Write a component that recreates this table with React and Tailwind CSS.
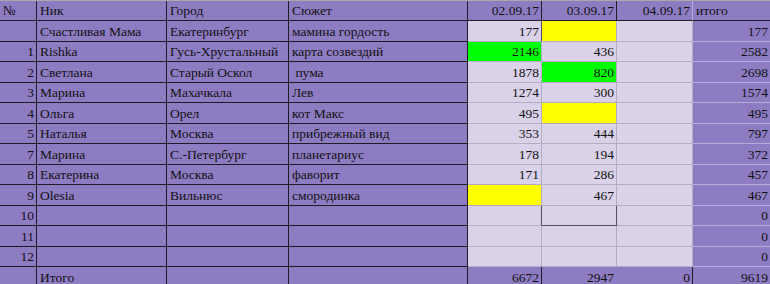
import React from "react";

const COLS = ["w-[37px]", "w-[130px]", "w-[122px]", "w-[179px]", "w-[74px]", "w-[75px]", "w-[76px]", "w-[77px]"];

// fill: l = lavender, g = green, y = yellow, b = lavender with dark frame
const ROWS = [
    { h: "h-[21px]", cells: ["", "Счастливая Мама", "Екатеринбург", "мамина гордость", "177", "", "", "177"], fill: ["d", "y", "l"] },
    { h: "h-[20px]", cells: ["1", "Rishka", "Гусь-Хрустальный", "карта созвездий", "2146", "436", "", "2582"], fill: ["g", "l", "l"] },
    { h: "h-[21px]", cells: ["2", "Светлана", "Старый Оскол", "\u00a0пума", "1878", "820", "", "2698"], fill: ["l", "g", "l"] },
    { h: "h-[20px]", cells: ["3", "Марина", "Махачкала", "Лев", "1274", "300", "", "1574"], fill: ["l", "l", "l"] },
    { h: "h-[21px]", cells: ["4", "Ольга", "Орел", "кот Макс", "495", "", "", "495"], fill: ["l", "y", "l"] },
    { h: "h-[20px]", cells: ["5", "Наталья", "Москва", "прибрежный вид", "353", "444", "", "797"], fill: ["l", "l", "l"] },
    { h: "h-[21px]", cells: ["7", "Марина", "С.-Петербург", "планетариус", "178", "194", "", "372"], fill: ["l", "l", "l"] },
    { h: "h-[20px]", cells: ["8", "Екатерина", "Москва", "фаворит", "171", "286", "", "457"], fill: ["l", "l", "l"] },
    { h: "h-[21px]", cells: ["9", "Olesia", "Вильнюс", "смородинка", "", "467", "", "467"], fill: ["y", "l", "l"] },
    { h: "h-[20px]", cells: ["10", "", "", "", "", "", "", "0"], fill: ["d", "b", "l"] },
    { h: "h-[21px]", cells: ["11", "", "", "", "", "", "", "0"], fill: ["l", "l", "l"] },
    { h: "h-[20px]", cells: ["12", "", "", "", "", "", "", "0"], fill: ["l", "l", "l"] },
];

const FILLS = {
    l: "bg-[#d9d2e9] border-[#b3adc2]",
    d: "bg-[#d9d2e9] border-b-[#b3adc2] border-r-[#55505f]",
    b: "bg-[#d9d2e9] border-[#55505f]",
    g: "bg-[#00ff00] border-[#b3adc2]",
    y: "bg-[#ffff00] border-[#b3adc2]",
};

const Cell = ({ w, right, className = "", children }) => (
    <div className={`${w} shrink-0 h-full flex items-center pt-[1px] overflow-hidden whitespace-nowrap ${right ? "justify-end pr-[2px]" : "pl-[3px]"} ${className}`}>
        {children}
    </div>
);

const DataRow = ({ row }) => (
    <div className={`flex ${row.h}`}>
        <Cell w={COLS[0]} right className="bg-[#8e7cc3] border-r border-b border-[#1d1b26]">{row.cells[0]}</Cell>
        <Cell w={COLS[1]} className="bg-[#8e7cc3] border-r border-b border-[#1d1b26]">{row.cells[1]}</Cell>
        <Cell w={COLS[2]} className="bg-[#8e7cc3] border-r border-b border-[#1d1b26]">{row.cells[2]}</Cell>
        <Cell w={COLS[3]} className="bg-[#8e7cc3] border-r border-b border-[#1d1b26]">{row.cells[3]}</Cell>
        <Cell w={COLS[4]} right className={`border-r border-b ${FILLS[row.fill[0]]}`}>{row.cells[4]}</Cell>
        <Cell w={COLS[5]} right className={`border-r border-b ${FILLS[row.fill[1]]}`}>{row.cells[5]}</Cell>
        <Cell w={COLS[6]} right className={`border-r border-b ${FILLS[row.fill[2]]}`}>{row.cells[6]}</Cell>
        <Cell w={COLS[7]} right className="bg-[#8e7cc3] border-b border-[#b6abd9]">{row.cells[7]}</Cell>
    </div>
);

export default function App() {
    return (
        <div className="w-[770px] h-[284px] overflow-hidden bg-[#8e7cc3] border-t border-[#a9a9a9] font-['Liberation_Serif','Times_New_Roman',serif] text-[13.5px] leading-none text-[#111]">
            {/* HEADER */}
            <div className="flex h-[20px]">
                <Cell w={COLS[0]} className="border-r border-b border-[#1d1b26]">№</Cell>
                <Cell w={COLS[1]} className="border-r border-b border-[#1d1b26]">Ник</Cell>
                <Cell w={COLS[2]} className="border-r border-b border-[#1d1b26]">Город</Cell>
                <Cell w={COLS[3]} className="border-r border-b border-[#1d1b26]">Сюжет</Cell>
                <Cell w={COLS[4]} right className="border-r border-b border-[#1d1b26]">02.09.17</Cell>
                <Cell w={COLS[5]} right className="border-r border-b border-[#1d1b26]">03.09.17</Cell>
                <Cell w={COLS[6]} right className="border-r border-b border-r-[#b6abd9] border-b-[#1d1b26]">04.09.17</Cell>
                <Cell w={COLS[7]} className="border-b border-[#1d1b26]">итого</Cell>
            </div>

            {/* ROWS */}
            {ROWS.map((row, i) => (
                <DataRow key={i} row={row} />
            ))}

            {/* TOTAL */}
            <div className="flex h-[20px]">
                <Cell w={COLS[0]} className="border-r border-[#1d1b26]" />
                <Cell w={COLS[1]} className="border-r border-[#1d1b26]">Итого</Cell>
                <Cell w={COLS[2]} className="border-r border-[#1d1b26]" />
                <Cell w={COLS[3]} className="border-r border-[#1d1b26]" />
                <Cell w={COLS[4]} right className="border-r border-[#1d1b26]">6672</Cell>
                <Cell w={COLS[5]} right className="border-r border-[#8e7cc3]">2947</Cell>
                <Cell w={COLS[6]} right className="border-r border-[#1d1b26]">0</Cell>
                <Cell w={COLS[7]} right>9619</Cell>
            </div>
        </div>
    );
}
